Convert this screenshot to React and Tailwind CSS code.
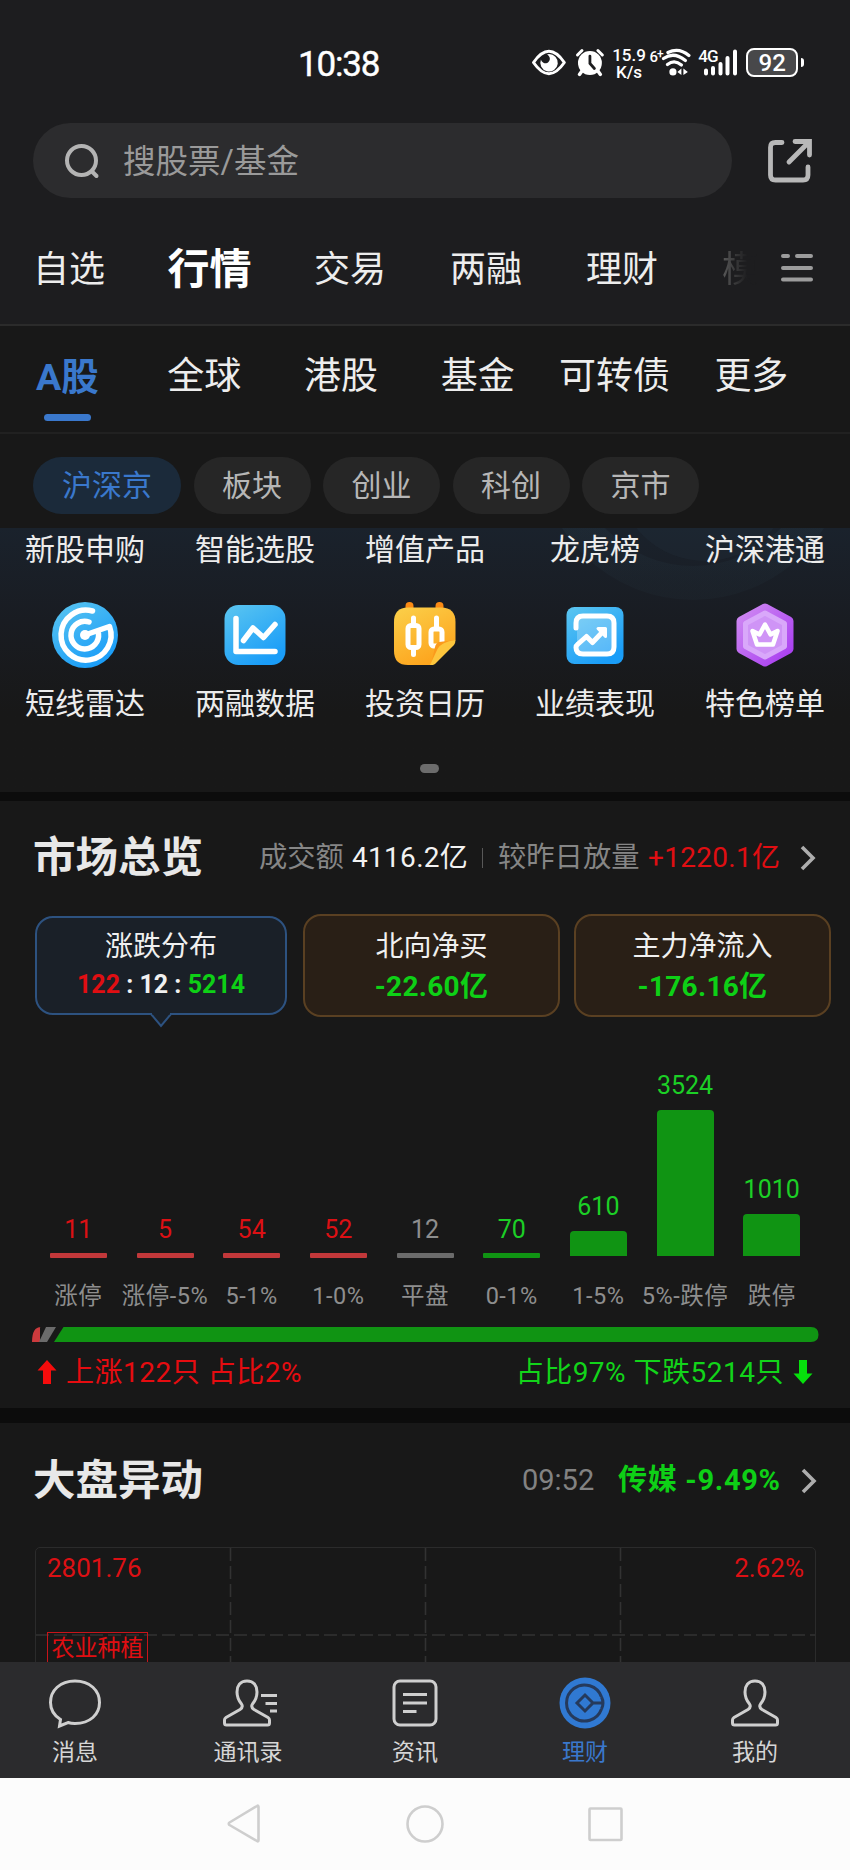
import clsx from 'clsx';

const mainTabs = ['自选', '行情', '交易', '两融', '理财'];
const subTabs = ['A股', '全球', '港股', '基金', '可转债', '更多'];
const chips = ['沪深京', '板块', '创业', '科创', '京市'];
const firstRow = ['新股申购', '智能选股', '增值产品', '龙虎榜', '沪深港通'];

const bars = [
  { label: '涨停', value: 11, height: 5, type: 'up' },
  { label: '涨停-5%', value: 5, height: 5, type: 'up' },
  { label: '5-1%', value: 54, height: 5, type: 'up' },
  { label: '1-0%', value: 52, height: 5, type: 'up' },
  { label: '平盘', value: 12, height: 5, type: 'flat' },
  { label: '0-1%', value: 70, height: 5, type: 'down' },
  { label: '1-5%', value: 610, height: 25, type: 'down' },
  { label: '5%-跌停', value: 3524, height: 146, type: 'down' },
  { label: '跌停', value: 1010, height: 42, type: 'down' },
];

const barColor = { up: 'bg-[#c2383a]', flat: 'bg-[#6b6b6b]', down: 'bg-[#109413]' };
const barText = { up: 'text-[#dc1014]', flat: 'text-[#8e8e8e]', down: 'text-[#1ccf26]' };

function StatusBar() {
  return (
    <div className="h-[123px] shrink-0 flex items-start pt-[43px] pl-[298px] pr-[46px] text-white">
      <span className="mt-px w-[234px] text-[35px] leading-[41px] tracking-[-1.2px] [-webkit-text-stroke:0.4px_white]">10:38</span>
      <svg width="36" height="38" viewBox="0 0 36 38" fill="none">
        <path d="M2.5 19.5Q18 -3 33.5 19.5Q18 42 2.5 19.5Z" stroke="#fff" strokeWidth="3" strokeLinejoin="round" />
        <path d="M18 11A8.8 8.8 0 1 1 10 16.500A4.500 4.500 0 1 0 16 11.500Z" fill="#fff" />
      </svg>
      <svg className="ml-[8px]" width="30" height="38" viewBox="0 0 30 38" fill="none" stroke="#fff" strokeLinecap="round">
        <circle cx="15" cy="20" r="12" fill="#fff" stroke="none" />
        <path d="M2.500 12L7 7.500M27.500 12L23 7.500" strokeWidth="3" />
        <path d="M7 28L4.500 31.500M23 28L25.500 31.500" strokeWidth="3.500" />
        <path d="M15 13V20.500L19.500 25.500" stroke="#1d1d1f" strokeWidth="2.800" />
      </svg>
      <div className="ml-[7px] mt-[4px] w-[35px] text-center text-[17px] leading-[17px] font-medium">
        <div>15.9</div>
        <div>K/s</div>
      </div>
      <span className="ml-[3px] mt-[4px] w-[15px] text-[15px] leading-[20px] font-medium tracking-[-1px] whitespace-nowrap">
        6<span className="relative top-[-4px] text-[12px]">+</span>
      </span>
      <svg className="-ml-[5px]" width="32" height="38" viewBox="0 0 32 38" fill="none" stroke="#fff" strokeWidth="3.300">
        <path d="M9 9.500Q20 4 30 12.500" strokeLinecap="round" />
        <path d="M4.500 15.500Q15 8 26.500 17.500" strokeLinecap="round" />
        <path d="M8.500 21.500Q15.500 16 22.500 22" strokeLinecap="round" />
        <circle cx="14" cy="29" r="3.600" fill="#fff" stroke="none" />
        <path d="M22.500 25.500V32L18.500 29ZM24.500 25.500V32L29 29Z" fill="#fff" stroke="none" />
      </svg>
      <div className="relative ml-[7px] w-[40px] h-[38px]">
        <span className="absolute left-0 top-[5px] text-[17px] leading-[16px] font-medium tracking-[-1px]">4G</span>
        <svg width="40" height="38" viewBox="0 0 40 38" stroke="#fff" strokeWidth="4" strokeLinecap="round">
          <path d="M8 27.500V30.500M15 25V30.500M22.500 21V30.500M29.500 15V30.500M37 8.500V30.500" />
        </svg>
      </div>
      <div className="ml-[8px] mt-[5px] w-[52px] h-[29px] rounded-[8px] border-2 border-white bg-[#48484a] text-center text-[24px] leading-[26px] font-medium">
        92
      </div>
      <div className="ml-[3px] mt-[15px] w-[3px] h-[9px] rounded-r-sm bg-white" />
    </div>
  );
}

function SearchBar() {
  return (
    <div className="h-[75px] shrink-0 flex items-center pl-[33px]">
      <div className="w-[699px] h-[75px] rounded-full bg-[#2c2c2e] flex items-center pl-[31px]">
        <svg width="36" height="36" viewBox="0 0 36 36" fill="none" stroke="#b4b4b4" strokeWidth="4" strokeLinecap="round">
          <circle cx="17.500" cy="17.500" r="14.500" />
          <path d="M28 28.500L32.500 33" />
        </svg>
        <span className="ml-[23px] mt-[2px] text-[32.500px] leading-[40px] text-[#9a9a9a]">搜股票/基金</span>
      </div>
      <svg className="ml-[35px]" width="46" height="46" viewBox="0 0 46 46" fill="none" stroke="#b8b8b8" strokeWidth="4.800" strokeLinecap="round" strokeLinejoin="round">
        <path d="M15 4.500H8.500Q3.500 4.500 3.500 9.500V37Q3.500 42 8.500 42H36Q41 42 41 37V29" />
        <path d="M28 3.500H42.500V17M42 4L22 24" strokeLinejoin="miter" />
      </svg>
    </div>
  );
}

function MainTabs() {
  return (
    <div className="h-[128px] shrink-0 flex items-center pl-[33px] pb-[1px] pt-[14px] border-b-2 border-[#2b2b2b]">
      <div className="flex items-center gap-16 w-[726px] pt-[5px] whitespace-nowrap text-[36px] leading-[60px] text-[#ededed]">
        {mainTabs.map((tab) => (
          <span key={tab} className={clsx(tab === '行情' && 'text-[42px] font-bold text-white -mx-[1.5px]')}>
            {tab}
          </span>
        ))}
        <span className="text-transparent bg-clip-text bg-linear-to-r from-[#5a5a5a] to-[#1d1d1f] to-70%">模</span>
      </div>
      <svg className="ml-[21px]" width="34" height="34" viewBox="0 0 34 34" stroke="#9c9c9c" strokeWidth="4" strokeLinecap="round">
        <path d="M3 5H8M17 5H31M3 17H31M3 28.500H31" />
      </svg>
    </div>
  );
}

function SubTabs() {
  return (
    <div className="h-[108px] shrink-0 flex border-b-2 border-[#212121] -ml-[1px] pt-[21px] bg-[#181818]">
      {subTabs.map((tab, i) => (
        <div key={tab} className="w-[136.8px] shrink-0 flex flex-col items-center">
          <span className={clsx('leading-[60px] whitespace-nowrap', i === 0 ? 'text-[37.500px] font-bold text-[#3a78cc]' : 'text-[37px] text-[#ededed]')}>
            {tab}
          </span>
          {i === 0 && <span className="mt-[7px] w-[47px] h-[7px] rounded-full bg-[#3a78cc]" />}
        </div>
      ))}
    </div>
  );
}

function Chips() {
  return (
    <div className="h-[94px] shrink-0 flex gap-[12.5px] pl-[33px] pt-[23px] bg-[#181818]">
      {chips.map((chip, i) => (
        <span
          key={chip}
          className={clsx(
            'h-[57px] rounded-full text-center text-[30px] leading-[58px]',
            i === 0 ? 'w-[148px] bg-[#1b2a3a] text-[#3a78cc]' : 'w-[117px] bg-[#262626] text-[#b6b6b6]'
          )}
        >
          {chip}
        </span>
      ))}
    </div>
  );
}

function RadarIcon() {
  return (
    <svg width="66" height="66" viewBox="-33 -33 66 66" fill="none" stroke="#fff" strokeLinecap="round" strokeLinejoin="round">
      <defs>
        <linearGradient id="blue" x1="0" y1="0" x2="0.6" y2="1">
          <stop offset="0" stopColor="#5cc6f0" />
          <stop offset="1" stopColor="#1a9df8" />
        </linearGradient>
      </defs>
      <circle r="33" fill="url(#blue)" stroke="none" />
      <path d="M7.500 -24A25 25 0 1 0 24.500 -8.500L0 0" strokeWidth="5.500" />
      <path d="M4 -13A13.800 13.800 0 1 0 13.500 -1.500" strokeWidth="5.500" />
      <circle r="5" fill="#fff" stroke="none" />
    </svg>
  );
}

function MarginIcon() {
  return (
    <svg width="66" height="66" viewBox="-33 -33 66 66" fill="none" stroke="#fff" strokeWidth="5.500" strokeLinecap="round" strokeLinejoin="round">
      <rect x="-30.500" y="-30" width="61" height="60" rx="14" fill="url(#blue)" stroke="none" />
      <path d="M-19 -16.500V16.500H20M-11.500 5.500L-2 -7L8.500 2.500L20 -10.500" />
    </svg>
  );
}

function CalendarIcon() {
  return (
    <svg width="66" height="66" viewBox="-33 -33 66 66" fill="none" strokeLinecap="round">
      <defs>
        <linearGradient id="gold" x1="0" y1="0" x2="0.5" y2="1">
          <stop offset="0" stopColor="#fbd04a" />
          <stop offset="1" stopColor="#fda51e" />
        </linearGradient>
      </defs>
      <path d="M-15.500 -29V-24M14.500 -29V-24" stroke="#f98a14" strokeWidth="8" />
      <path d="M-17 -27.500H16Q30.500 -27.500 30.500 -13V5L6 30H-17Q-31 30 -31 16V-13Q-31 -27.500 -17 -27.500Z" fill="url(#gold)" />
      <g stroke="#fff" strokeWidth="5">
        <path d="M-11.500 -17V-10M-11.500 14V19.500M11.500 -17V-8" />
        <rect x="-17" y="-9.500" width="11" height="22" rx="3" />
        <rect x="6" y="-6" width="11" height="17" rx="3" />
      </g>
      <path d="M30.500 5L14 7Q11 8 10 12L6 30Z" fill="#fb9a1c" />
      <path d="M30.500 5Q16 7 12.500 14L5 30H8Q10 29.500 12 27L29 10Q30.500 8 30.500 5Z" fill="#fdc63d" />
    </svg>
  );
}

function PerformanceIcon() {
  return (
    <svg width="66" height="66" viewBox="-33 -33 66 66" fill="none" stroke="#fff" strokeWidth="5" strokeLinecap="round" strokeLinejoin="round">
      <rect x="-28.500" y="-28" width="57" height="57" rx="8" fill="url(#blue)" stroke="none" />
      <rect x="-18" y="-18" width="36" height="36" rx="5" fill="#fff" fillOpacity="0.25" stroke="none" />
      <path d="M-19 -7V-12Q-19 -19 -12 -19H12Q19 -19 19 -12V12Q19 19 12 19H-12Q-19 19 -19 12.500Q-19 10.500 -17 9L-8.500 1.500L-2.500 7.500L8 -3.500" />
      <path d="M3 -6.500H10.500V1.500Z" fill="#fff" strokeWidth="3" />
    </svg>
  );
}

function RankIcon() {
  return (
    <svg width="66" height="66" viewBox="-33 -33 66 66" fill="none" strokeLinejoin="round">
      <defs>
        <linearGradient id="purple" x1="0" y1="0" x2="1" y2="1">
          <stop offset="0" stopColor="#cf8af2" />
          <stop offset="1" stopColor="#a83cf0" />
        </linearGradient>
      </defs>
      <path d="M0 -27L24 -14V14L0 27L-24 14V-14Z" fill="url(#purple)" stroke="url(#purple)" strokeWidth="9" />
      <path d="M0 -22L19.500 -11.500V11.500L0 22L-19.500 11.500V-11.500Z" fill="#cf94f6" stroke="#d9a8fa" strokeWidth="5" />
      <path d="M-12.500 -4L-8 9.500H8L12.500 -4L5.500 -0.500L0 -10.500L-5.500 -0.500Z" stroke="#fff" strokeWidth="4.500" />
    </svg>
  );
}

const secondRow = [
  { label: '短线雷达', Icon: RadarIcon },
  { label: '两融数据', Icon: MarginIcon },
  { label: '投资日历', Icon: CalendarIcon },
  { label: '业绩表现', Icon: PerformanceIcon },
  { label: '特色榜单', Icon: RankIcon },
];

function Shortcuts() {
  return (
    <div className="relative h-[264px] shrink-0 overflow-hidden bg-linear-to-b from-[#1a222c] via-[#191c22] via-35% to-[#181818] to-70% text-[30px] text-[#ececec]">
      <svg className="absolute left-0 top-0" width="850" height="110" viewBox="0 0 850 110">
        <defs>
          <linearGradient id="ring" x1="0" y1="0" x2="0" y2="1">
            <stop offset="0.5" stopColor="#5fa0b8" stopOpacity="0.09" />
            <stop offset="1" stopColor="#5fa0b8" stopOpacity="0.03" />
          </linearGradient>
        </defs>
        <circle cx="693" cy="-83" r="138" fill="none" stroke="url(#ring)" strokeWidth="34" />
        <circle cx="705" cy="-55" r="88" fill="#5fa0b8" fillOpacity="0.04" />
      </svg>
      <div className="relative grid grid-cols-5 text-center leading-[44px]">
        {firstRow.map((label) => (
          <span key={label}>{label}</span>
        ))}
      </div>
      <div className="relative mt-[30px] grid grid-cols-5">
        {secondRow.map(({ label, Icon }) => (
          <div key={label} className="flex flex-col items-center">
            <Icon />
            <span className="mt-[14px] leading-[44px]">{label}</span>
          </div>
        ))}
      </div>
      <div className="mt-[38px] ml-[420px] w-[19px] h-[9px] rounded-full bg-[#6c6c6c]" />
    </div>
  );
}

function Chevron() {
  return (
    <svg width="16" height="28" viewBox="0 0 16 28" fill="none" stroke="#adadad" strokeWidth="3.600">
      <path d="M2 3L13 14L2 25" />
    </svg>
  );
}

function Overview() {
  return (
    <section className="h-[607px] shrink-0 bg-[#181818]">
      <div className="h-[113px] flex items-center pt-px pl-[33px] text-[28px] leading-[40px] whitespace-nowrap">
        <h2 className="w-[226px] text-[42.500px] leading-[60px] font-bold text-[#e8e8e8]">市场总览</h2>
        <span className="w-[93px] text-[28.300px] text-[#868686]">成交额</span>
        <span className="w-[130px] tracking-[0.3px] text-[#f2f2f2]">4116.2亿</span>
        <span className="w-px h-5 bg-[#585858]" />
        <span className="ml-[15px] w-[150px] text-[28.300px] text-[#868686]">较昨日放量</span>
        <span className="w-[152px] tracking-[0.3px] text-[#e00e12]">+1220.1亿</span>
        <Chevron />
      </div>
      <div className="flex items-start pl-[35px] text-center text-[28px] text-[#f0f0f0]">
        <div className="relative mt-[2px] w-[252px] h-[99px] rounded-[18px] border-2 border-[#2d5280] bg-[#1a2028] pt-[9px]">
          <div className="leading-[40px]">涨跌分布</div>
          <div className="text-[25px] leading-[36px] font-bold">
            <span className="text-[#e00e12]">122</span> : 12 : <span className="text-[#0ed016]">5214</span>
          </div>
          <svg className="absolute left-[113px] top-[95px]" width="22" height="16" viewBox="0 0 22 16">
            <path d="M1 1L11 13L21 1" fill="#1a2028" stroke="#2d5280" strokeWidth="2" />
            <path d="M2 0H20" stroke="#1a2028" strokeWidth="3" />
          </svg>
        </div>
        <div className="ml-[16px] w-[257px] h-[103px] rounded-[18px] border-2 border-[#5a4022] bg-[#291f16] pt-[11px]">
          <div className="leading-[40px]">北向净买</div>
          <div className="leading-[40px] font-bold tracking-[0.3px] text-[#0ed016]">-22.60亿</div>
        </div>
        <div className="ml-[14px] w-[257px] h-[103px] rounded-[18px] border-2 border-[#5a4022] bg-[#291f16] pt-[11px]">
          <div className="leading-[40px]">主力净流入</div>
          <div className="leading-[40px] font-bold tracking-[0.3px] text-[#0ed016]">-176.16亿</div>
        </div>
      </div>

      <div className="mt-[37px] ml-[35px] w-[780px] h-[263px] flex">
        {bars.map((bar) => (
          <div key={bar.label} className="flex-1 min-w-0 flex flex-col items-center">
            <div className="h-[202px] flex flex-col items-center justify-end">
              <span className={clsx('text-[25px] leading-[30px]', bar.height > 5 ? 'mb-[9px]' : 'mb-[6px]', barText[bar.type])}>{bar.value}</span>
              <div
                className={clsx('w-[57px]', barColor[bar.type], bar.height > 5 ? 'rounded-t-[4px]' : 'rounded-[1px] relative top-[2px]')}
                style={{ height: bar.height }}
              />
            </div>
            <span className="mt-[24px] text-[23.500px] leading-[32px] tracking-[0.5px] whitespace-nowrap text-[#8e8e8e]">{bar.label}</span>
          </div>
        ))}
      </div>

      <svg className="ml-[32px] mt-[10px]" width="787" height="15" viewBox="0 0 787 15">
        <path d="M9 0Q0 0 0 15H8V0Z" fill="#cc3a3d" />
        <path d="M14 0H24L15 15H7Z" fill="#6b6b6b" />
        <path d="M31.500 0H779Q786.500 0 786.500 7.500T779 15H22Z" fill="#109413" />
      </svg>
      <div className="mt-[9px] pl-[37px] pr-[37px] flex items-center justify-between text-[28px] leading-[40px] tracking-[0.5px]">
        <div className="flex items-center text-[#e60c10]">
          <svg width="20" height="24" viewBox="0 0 20 24">
            <path d="M10 0L19.500 10.500H14V24H6V10.500H0.500Z" fill="#f60c0c" />
          </svg>
          <span className="ml-[9px] mt-[2px]">上涨122只 占比2%</span>
        </div>
        <div className="flex items-center text-[#12d41a]">
          <span className="mr-[9px] mt-[2px]">占比97% 下跌5214只</span>
          <svg width="20" height="24" viewBox="0 0 20 24">
            <path d="M10 24L19.500 13.500H14V0H6V13.500H0.500Z" fill="#06e00c" />
          </svg>
        </div>
      </div>
    </section>
  );
}

function MarketMoves() {
  return (
    <section className="h-[239px] shrink-0 overflow-hidden bg-[#181818]">
      <div className="h-[124px] pb-[8px] flex items-center pl-[33px] whitespace-nowrap">
        <h2 className="w-[489px] text-[42.500px] leading-[60px] font-bold text-[#e8e8e8]">大盘异动</h2>
        <span className="w-[96px] text-[29px] text-[#828282]">09:52</span>
        <span className="w-[183px] text-[29px] font-bold tracking-[0.7px] text-[#0ed016]">传媒 -9.49%</span>
        <Chevron />
      </div>
      <div className="relative ml-[35px] w-[781px] h-[140px] rounded-t-[5px] border border-[#2b2b2b]">
        <svg className="absolute left-0 top-0" width="779" height="138" viewBox="0 0 779 138" stroke="#323232" strokeWidth="1.600">
          <path d="M0 87H779" strokeDasharray="13 5" />
          <path d="M194.500 0V138M389.500 0V138M584.500 0V138" strokeDasharray="13 5" />
        </svg>
        <div className="relative flex justify-between pl-[11px] pr-[11px] pt-[2px] text-[26px] leading-[36px] text-[#dc1014]">
          <span>2801.76</span>
          <span>2.62%</span>
        </div>
        <span className="relative block ml-[11px] mt-[46px] w-[101px] h-[34px] border border-[#c8141a] text-center text-[23px] leading-[32px] text-[#e00e12]">
          农业种植
        </span>
      </div>
    </section>
  );
}

const personPath = 'M27 4C20 4 17 9 17 15C17 21 19 24 21.500 27Q23.500 30 20 32.500L6 40.500Q4.500 41.500 4.500 43V46Q4.500 48 6.500 48H47.500Q49.500 48 49.500 46V43Q49.500 41.500 48 40.500L34 32.500Q30.500 30 32.500 27C35 24 37 21 37 15C37 9 34 4 27 4Z';

const navItems = [
  {
    label: '消息',
    icon: <path d="M27 4C12 4 2.500 13.500 2.500 25.500C2.500 33 6 38.500 12.500 42.500L11.500 49L20 45.500Q23 46.500 27 46.500C42 46.500 51.500 37.500 51.500 25.500C51.500 13.500 42 4 27 4Z" />,
  },
  {
    label: '通讯录',
    icon: (
      <>
        <path d={personPath} transform="translate(-1 0)" />
        <path d="M40 18.500H56M44.500 26.500H56M49 34H56" />
      </>
    ),
  },
  {
    label: '资讯',
    icon: (
      <>
        <rect x="6" y="4" width="42" height="44" rx="6" />
        <path d="M15 17.500H39M15 26H39M15 34.500H28.500" />
      </>
    ),
  },
  {
    label: '理财',
    active: true,
    icon: (
      <>
        <circle cx="27" cy="26" r="25.500" fill="#3079d2" stroke="none" />
        <path d="M43.500 20A18 18 0 1 0 43.500 32" stroke="#253a5c" strokeWidth="3" />
        <path d="M45 26H35L27 34L19 26L27 18L35 26M43.500 20Q45 23 45 26Q45 29 43.500 32" stroke="#253a5c" strokeWidth="3" />
      </>
    ),
  },
  { label: '我的', icon: <path d={personPath} /> },
];

function BottomNav() {
  return (
    <nav className="h-[116px] shrink-0 flex -ml-[10px] pt-[15px] bg-[#2b2b2d]">
      {navItems.map((item, i) => (
        <div
          key={item.label}
          className={clsx('w-[170px] flex flex-col items-center text-[23px] leading-[32px]', i === 1 && 'pl-[6px]', item.active ? 'text-[#3a78cc]' : 'text-[#d6d6d6]')}
        >
          <svg width="54" height="52" viewBox="0 0 54 52" className="overflow-visible" fill="none" stroke="#cfcfcf" strokeWidth="3">
            {item.icon}
          </svg>
          <span className="mt-[8px]">{item.label}</span>
        </div>
      ))}
    </nav>
  );
}

function SystemNav() {
  return (
    <div className="h-[92px] shrink-0 bg-[#fcfcfc] flex items-center pl-[226px]">
      <svg width="398" height="44" viewBox="0 0 398 44" fill="none" stroke="#cecece" strokeWidth="2.600" strokeLinejoin="round">
        <path d="M3.500 20.500L31 4Q32.500 3 32.500 5V38Q32.500 40 31 39L3.500 23Q2 21.500 3.500 20.500Z" />
        <circle cx="199" cy="22" r="17.500" />
        <rect x="363.500" y="6.500" width="32" height="31.500" rx="1" />
      </svg>
    </div>
  );
}

export default function App() {
  return (
    <div className="w-[850px] h-[1870px] overflow-hidden flex flex-col bg-[#1d1d1f] font-['Roboto','Noto_Sans_CJK_SC',sans-serif]">
      <StatusBar />
      <SearchBar />
      <MainTabs />
      <SubTabs />
      <Chips />
      <Shortcuts />
      <div className="h-[9px] shrink-0 bg-[#0c0c0c]" />
      <Overview />
      <div className="h-[15px] shrink-0 bg-[#0c0c0c]" />
      <MarketMoves />
      <BottomNav />
      <SystemNav />
    </div>
  );
}
